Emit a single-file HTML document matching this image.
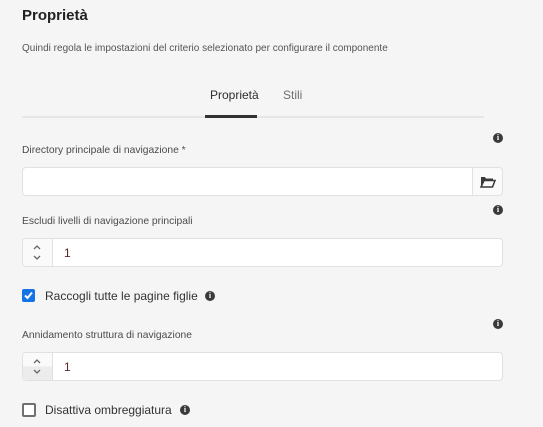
<!DOCTYPE html>
<html><head><style>
body{margin:0;width:543px;height:427px;background:#f5f5f5;font-family:"Liberation Sans",sans-serif;color:#333;position:relative;overflow:hidden}
.a{position:absolute}
.info{position:absolute;width:10px;height:10px;border-radius:50%;background:#3a3a3a;color:#fff;font:bold 8px/10px "Liberation Serif",serif;text-align:center}
.inp{position:absolute;left:22px;width:481px;height:29px;background:#fff;border:1px solid #e1e1e1;border-radius:4px;box-sizing:border-box}
.lbl{position:absolute;left:22px;font-size:10.3px;color:#4b4b4b}
.step{position:absolute;left:0;top:0;width:29px;height:27px;border-right:1px solid #e1e1e1;background:#fafafa;border-radius:4px 0 0 4px}
</style></head><body>
<div class="a" style="left:22px;top:7px;font-size:15px;font-weight:bold;color:#222">Proprietà</div>
<div class="a" style="left:22px;top:43px;font-size:10px;color:#555">Quindi regola le impostazioni del criterio selezionato per configurare il componente</div>
<div class="a" style="left:210px;top:88px;font-size:12px;color:#2c2c2c">Proprietà</div>
<div class="a" style="left:283px;top:88px;font-size:12px;color:#6e6e6e">Stili</div>
<div class="a" style="left:22px;top:116px;width:462px;height:2px;background:#e6e6e6"></div>
<div class="a" style="left:205px;top:115px;width:52px;height:3px;background:#323232"></div>

<div class="info" style="left:493px;top:133px">i</div>
<div class="lbl" style="top:145px">Directory principale di navigazione *</div>
<div class="inp" style="top:167px"><div style="position:absolute;right:0;top:0;width:29px;height:27px;border-left:1px solid #e1e1e1;background:#fafafa;border-radius:0 4px 4px 0">
<svg width="16" height="12" style="position:absolute;left:7px;top:8px" viewBox="0 0 16 12"><path d="M1 1h4l1 1.5h7v2H4L1 11z" fill="#3a3a3a"/><path d="M1 11L4 4.5h11L12.5 11z" fill="none" stroke="#3a3a3a" stroke-width="1.5"/></svg></div></div>

<div class="info" style="left:493px;top:205px">i</div>
<div class="lbl" style="top:216px">Escludi livelli di navigazione principali</div>
<div class="inp" style="top:238px"><div class="step"><svg width="29" height="27" viewBox="0 0 29 27"><path d="M11 10l3-3 3 3M11 17l3 3 3-3" fill="none" stroke="#666" stroke-width="1.3"/></svg></div><div class="a" style="left:41px;top:7px;font-size:12px;color:#5a2a2a">1</div></div>

<div class="a" style="left:22px;top:289px;width:13px;height:13px;background:#1473e6;border-radius:2px"><svg width="13" height="13" viewBox="0 0 13 13"><path d="M3 6.5l2.5 2.5L10 3.5" fill="none" stroke="#fff" stroke-width="2"/></svg></div>
<div class="a" style="left:45px;top:289px;font-size:12px;color:#333">Raccogli tutte le pagine figlie</div>
<div class="info" style="left:205px;top:291px">i</div>

<div class="info" style="left:493px;top:319px">i</div>
<div class="lbl" style="top:330px">Annidamento struttura di navigazione</div>
<div class="inp" style="top:352px"><div class="step" style="background:linear-gradient(#fafafa 50%,#ececec 50%)"><svg width="29" height="27" viewBox="0 0 29 27"><path d="M11 10l3-3 3 3M11 17l3 3 3-3" fill="none" stroke="#666" stroke-width="1.3"/></svg></div><div class="a" style="left:41px;top:7px;font-size:12px;color:#5a2a2a">1</div></div>

<div class="a" style="left:22px;top:403px;width:10px;height:10px;border:2px solid #707070;border-radius:2px;background:#fff"></div>
<div class="a" style="left:45px;top:403px;font-size:12px;color:#333">Disattiva ombreggiatura</div>
<div class="info" style="left:180px;top:405px">i</div>
</body></html>
